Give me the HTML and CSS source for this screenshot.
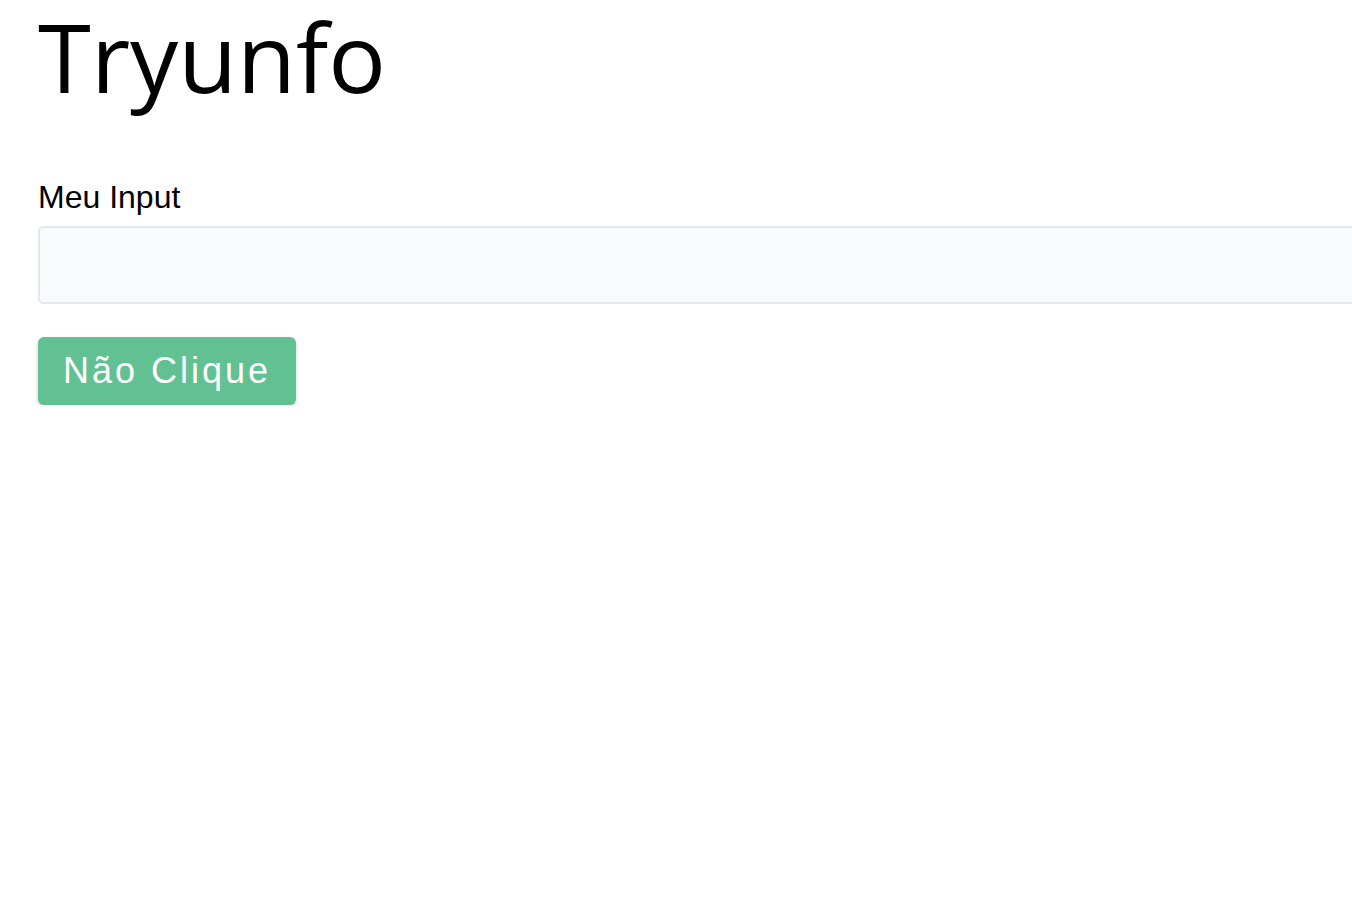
FILE: index.html
```html
<!DOCTYPE html>
<html lang="pt-BR">
<head>
<meta charset="utf-8">
<title>Tryunfo</title>
<link rel="stylesheet" href="styles.css">
</head>
<body>
<main class="page">
  <h1 class="title">Tryunfo</h1>
  <form class="form">
    <label class="field">
      <span class="field-label">Meu Input</span>
      <input class="field-input" type="text">
    </label>
    <button class="btn" type="button">Não Clique</button>
  </form>
</main>
</body>
</html>
```
FILE: styles.css
```css
html, body {
  margin: 0;
  padding: 0;
  background: #ffffff;
}
body {
  font-family: "Liberation Sans", Arial, sans-serif;
  color: #000;
}
.page {
  padding: 0 0 0 38px;
  display: flex;
  flex-direction: column;
}
.title {
  margin: 0;
  font-family: "Open Sans", sans-serif;
  font-weight: 400;
  font-size: 96px;
  line-height: 112px;
}
.form {
  display: flex;
  flex-direction: column;
  align-items: flex-start;
  margin-top: 67px;
}
.field {
  display: flex;
  flex-direction: column;
  width: 100%;
}
.field-label {
  font-size: 32px;
  line-height: 37px;
}
.field-input {
  box-sizing: border-box;
  height: 78px;
  width: calc(100% + 40px);
  margin-top: 10px;
  border: 2px solid #e2e8f0;
  border-radius: 5px;
  background: #f8fafc;
  outline: none;
}
.btn {
  margin-top: 33px;
  height: 68px;
  width: 258px;
  border: none;
  border-radius: 6px;
  background: #61c192;
  color: #fff;
  font-family: "Liberation Sans", Arial, sans-serif;
  font-size: 36px;
  letter-spacing: 3px;
  padding: 0;
  box-shadow: 0 2px 4px rgba(0,0,0,0.2);
}
```
